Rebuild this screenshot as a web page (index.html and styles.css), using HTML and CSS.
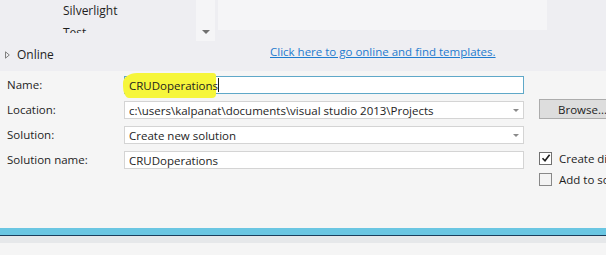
FILE: index.html
```html
<!DOCTYPE html>
<html lang="en">
<head>
    <meta charset="UTF-8">
    <title>New Project</title>
    <link rel="stylesheet" href="styles.css">
</head>
<body>
    <div class="top">
        <div class="templates">
            <div class="list">
                <div class="items">
                    <div class="item">Silverlight</div>
                    <div class="item">Test</div>
                </div>
                <div class="scroll"><span class="arrow"></span></div>
            </div>
            <div class="preview"></div>
        </div>
        <div class="online-row">
            <div class="online">
                <svg class="tri" width="5" height="8" viewBox="0 0 5 8"><path d="M0.5 0.8 L4.3 4 L0.5 7.2 Z" fill="none" stroke="#808080" stroke-width="1"/></svg>
                Online
            </div>
            <a class="link" href="#">Click here to go online and find templates.</a>
        </div>
    </div>

    <form class="form">
        <label>Name:</label>
        <div class="field focused">
            <span class="marker"></span>
            <span class="value">CRUDoperations</span><span class="caret"></span>
        </div>
        <div></div>

        <label>Location:</label>
        <div class="field combo">
            <span class="value">c:\users\kalpanat\documents\visual studio 2013\Projects</span>
            <span class="drop"></span>
        </div>
        <div><button type="button" class="browse">Browse...</button></div>

        <label>Solution:</label>
        <div class="field combo">
            <span class="value">Create new solution</span>
            <span class="drop"></span>
        </div>
        <div></div>

        <label>Solution name:</label>
        <div class="field">
            <span class="value">CRUDoperations</span>
        </div>
        <div class="checks">
            <div class="check"><span class="box on"><svg width="10" height="10" viewBox="0 0 10 10"><path d="M1.5 5.2 L4 7.8 L8.6 1.8" fill="none" stroke="#1e1e1e" stroke-width="1.6"/></svg></span>Create directory for solution</div>
            <div class="check"><span class="box"></span>Add to source control</div>
        </div>
    </form>

    <div class="footer"></div>
</body>
</html>
```

FILE: styles.css
```css
body {
    margin: 0;
    width: 606px;
    height: 255px;
    overflow: hidden;
    font-family: 'Open Sans', 'Noto Sans', sans-serif;
    font-size: 11.5px;
    color: #1e1e1e;
    background: #f5f5f5;
}

.top {
    height: 71px;
    background: #eeeef2;
}

.templates {
    display: flex;
    height: 41px;
}

.list {
    display: flex;
    width: 215px;
}

.items {
    width: 196px;
    height: 33px;
    overflow: hidden;
    padding-left: 63px;
    box-sizing: border-box;
}

.item {
    height: 22px;
    line-height: 22px;
    font-size: 12px;
}

.scroll {
    width: 19px;
    background: #f5f5f7;
    display: flex;
    justify-content: center;
    align-items: flex-end;
    padding-bottom: 7px;
    box-sizing: border-box;
}

.arrow {
    width: 0;
    height: 0;
    border-left: 4px solid transparent;
    border-right: 4px solid transparent;
    border-top: 4px solid #707070;
}

.preview {
    margin-left: 3px;
    width: 329px;
    height: 30px;
    background: #f5f5f7;
}

.online-row {
    display: flex;
    align-items: center;
    height: 20px;
}

.online {
    display: flex;
    align-items: center;
    width: 270px;
    padding-left: 5px;
    box-sizing: border-box;
    font-size: 12px;
    margin-top: 7px;
}

.tri {
    margin-right: 7px;
}

.link {
    color: #1e7bcf;
    text-decoration: underline;
    font-size: 11.5px;
}

.form {
    display: grid;
    grid-template-columns: 102px 400px auto;
    grid-auto-rows: 18px;
    column-gap: 15px;
    row-gap: 7px;
    padding: 5px 0 0 7px;
    height: 152px;
    box-sizing: border-box;
}

.form label {
    line-height: 18px;
}

.field {
    position: relative;
    display: flex;
    align-items: center;
    background: #fff;
    border: 1px solid #d4d4d4;
    padding-left: 4px;
    box-sizing: border-box;
    height: 18px;
}

.field.focused {
    border-color: #5fa8c8;
}

.marker {
    position: absolute;
    left: -2px;
    top: -4px;
    width: 93px;
    height: 25px;
    background: #f6f63a;
    border-radius: 14px 3px 4px 6px / 10px 3px 4px 12px;
}

.value {
    position: relative;
    white-space: nowrap;
}

.caret {
    position: relative;
    width: 1px;
    height: 14px;
    background: #1e1e1e;
}

.combo .drop {
    position: absolute;
    right: 4px;
    top: 7px;
    border-left: 3px solid transparent;
    border-right: 3px solid transparent;
    border-top: 3px solid #8a8a8a;
}

.browse {
    margin-top: -2px;
    width: 76px;
    height: 20px;
    padding: 0 0 0 18px;
    text-align: left;
    font-family: inherit;
    font-size: 11.5px;
    color: #1e1e1e;
    background: #dddddd;
    border: 1px solid #acacac;
}

.checks {
    display: flex;
    flex-direction: column;
    gap: 7px;
    white-space: nowrap;
}

.check {
    display: flex;
    align-items: center;
    height: 14px;
}

.box {
    width: 11px;
    height: 11px;
    border: 1px solid #888;
    background: #f3f3f3;
    margin-right: 7px;
    display: flex;
    align-items: center;
    justify-content: center;
}

.box.on {
    background: #fff;
    border-color: #707070;
}

.footer {
    height: 7px;
    margin-top: 5px;
    background: #6ac6e2;
    border-bottom: 1px solid #1c3d5c;
    box-shadow: 0 7px 0 #e6e8ea;
}
```
